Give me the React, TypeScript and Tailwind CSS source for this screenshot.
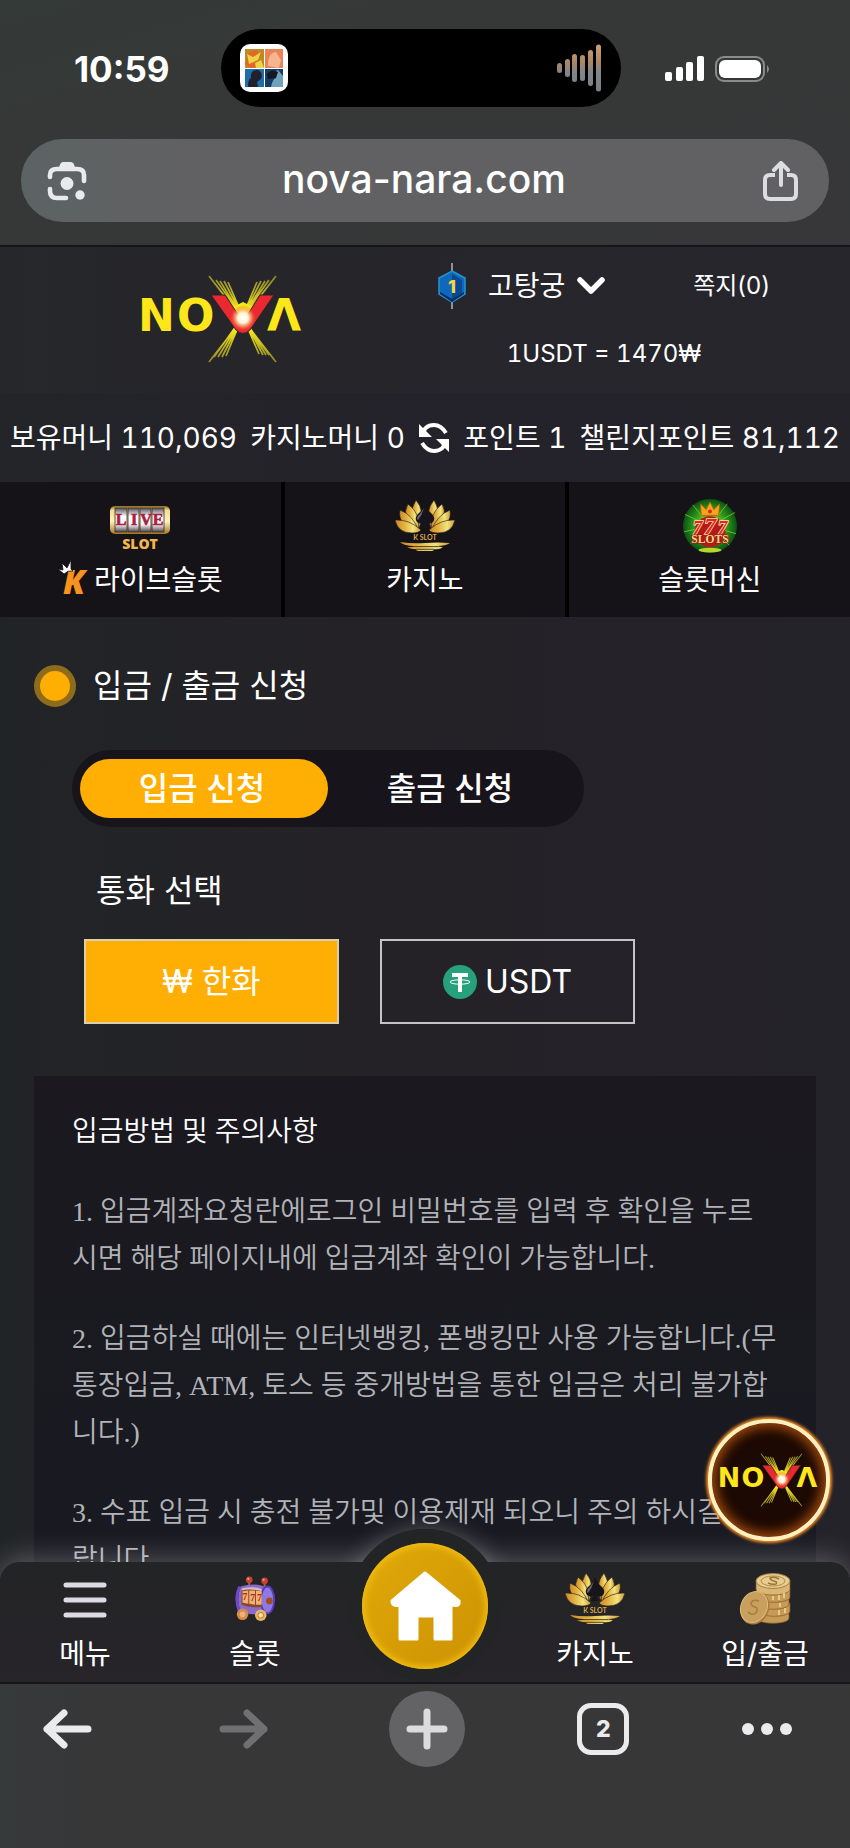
import { useId } from 'react'

const notices = [
  '1. 입금계좌요청란에로그인 비밀번호를 입력 후 확인을 누르시면 해당 페이지내에 입금계좌 확인이 가능합니다.',
  '2. 입금하실 때에는 인터넷뱅킹, 폰뱅킹만 사용 가능합니다.(무통장입금, ATM, 토스 등 중개방법을 통한 입금은 처리 불가합니다.)',
  '3. 수표 입금 시 충전 불가및 이용제재 되오니 주의 하시길 바랍니다.',
]

const waveBars = [
  { x: 0, h: 10 },
  { x: 8, h: 18 },
  { x: 15, h: 28 },
  { x: 23, h: 26 },
  { x: 31, h: 36 },
  { x: 39, h: 47 },
]

function NovaLogo({ className }: { className?: string }) {
  const id = useId()
  return (
    <svg viewBox="0 0 164 88" className={className} role="img" aria-label="NOVA">
      <defs>
        <radialGradient id={`${id}glow`}>
          <stop offset="0" stopColor="#fff" />
          <stop offset=".4" stopColor="#fff6d8" />
          <stop offset=".65" stopColor="#ffb070" stopOpacity=".7" />
          <stop offset="1" stopColor="#f5452a" stopOpacity="0" />
        </radialGradient>
        <linearGradient id={`${id}rays`} x1="0" x2="0" y1="0" y2="88" gradientUnits="userSpaceOnUse">
          <stop offset="0" stopColor="#8a8528" />
          <stop offset=".4" stopColor="#f6e61c" />
          <stop offset=".62" stopColor="#f6e61c" />
          <stop offset="1" stopColor="#8a8528" />
        </linearGradient>
      </defs>
      <g stroke={`url(#${id}rays)`} strokeWidth="1.7">
        <path d="M69 1 136 87M76 5 129 80M80 6 126 80M84 6 123 80M88 7 119 79" />
        <path d="M136 1 69 87M129 5 74 82M125 6 78 82M121 6 82 82M117 7 86 81" />
      </g>
      <path d="m93 32 10-5 10 5-10 20z" fill="#f6e61c" />
      <g fill="#fde71a" fontFamily="DejaVu Sans" fontWeight="700" fontSize="44">
        <text x="-2" y="56">
          N
        </text>
        <text x="37" y="56">
          O
        </text>
        <text x="127" y="56">
          Λ
        </text>
      </g>
      <path d="M71 20h14l18 27 17-27h14l-24 35q-7 7-14 0z" fill="#e9292f" stroke="#26252a" strokeWidth="1" />
      <circle cx="103" cy="43" r="13" fill={`url(#${id}glow)`} />
    </svg>
  )
}

function LotusIcon() {
  const id = useId()
  return (
    <svg viewBox="0 0 60 54" className="h-[54px] w-[60px]">
      <defs>
        <linearGradient id={`${id}gold`}>
          <stop offset="0" stopColor="#d08a25" />
          <stop offset=".35" stopColor="#e2b040" />
          <stop offset=".7" stopColor="#f3e37c" />
          <stop offset="1" stopColor="#cf9a38" />
        </linearGradient>
      </defs>
      <g fill={`url(#${id}gold)`} stroke="#1a171b" strokeWidth=".6">
        <path d="M21 1q10 12 3 28-13-11-3-28z" />
        <path d="M39 1q-10 12-3 28 13-11 3-28z" />
        <path d="M13 5Q5 19 23 31 27 16 13 5z" />
        <path d="M47 5q8 14-10 26Q33 16 47 5z" />
        <path d="M5 11q-3 16 19 21Q18 16 5 11z" />
        <path d="M55 11q3 16-19 21 6-16 19-21z" />
        <path d="M0 21q3 13 17 13 7 0 9-3Q14 20 0 21z" />
        <path d="M60 21q-3 13-17 13-7 0-9-3 12-11 26-10z" />
      </g>
      <path d="M30 5q2 6 7 10 4 4 1 8-3 3-7 0l3 6h-8l3-6q-4 3-7 0-3-4 1-8 5-4 7-10z" fill="#17151b" />
      <path d="M29 9q-3 5-6 8-2 3 0 4 4-5 6-12z" fill="#6a6670" />
      <text x="30" y="41" textAnchor="middle" fontFamily="Lato" fontSize="7" fontWeight="700" fill="#d9a744">
        K SLOT
      </text>
      <path
        d="M5 43q12 2 25 1t25 0q-4 3-13 3 2 1 6 1-3 3-9 2 1 1-2 2H23q-3-1-2-2-6 0-9-2 4 1 7-1-10 0-14-4z"
        fill={`url(#${id}gold)`}
      />
      <path d="M17 47.600h26M21 50.300h18" stroke="#2a2118" strokeWidth=".8" />
    </svg>
  )
}

function LiveSlotIcon() {
  return (
    <svg viewBox="0 0 60 54" className="h-[54px] w-[60px]">
      <defs>
        <linearGradient id="reel" x2="0" y2="1">
          <stop offset="0" stopColor="#8f6a1e" />
          <stop offset=".15" stopColor="#f5dd8c" />
          <stop offset=".55" stopColor="#fff2bd" />
          <stop offset="1" stopColor="#a37622" />
        </linearGradient>
        <linearGradient id="paper" x2="0" y2="1">
          <stop offset="0" stopColor="#55505c" />
          <stop offset=".35" stopColor="#fff" />
          <stop offset=".7" stopColor="#f3eef2" />
          <stop offset="1" stopColor="#4a444e" />
        </linearGradient>
      </defs>
      <rect x="0" y="7" width="60" height="28" rx="5" fill="url(#reel)" />
      <g fill="url(#paper)" stroke="#3d2b18" strokeWidth=".8">
        <rect x="5" y="9" width="12" height="24" />
        <rect x="18" y="9" width="11" height="24" />
        <rect x="30" y="9" width="11" height="24" />
        <rect x="42" y="9" width="12" height="24" />
      </g>
      <g fontFamily="Liberation Serif" fontWeight="700" fontSize="16" fill="#a8203d" stroke="#a8203d" strokeWidth=".6" textAnchor="middle">
        <text x="11" y="26">
          L
        </text>
        <text x="24" y="26">
          I
        </text>
        <text x="36" y="26">
          V
        </text>
        <text x="48" y="26">
          E
        </text>
      </g>
      <text x="30" y="50" textAnchor="middle" fontFamily="Open Sans" fontWeight="800" fontSize="14" fill="#f3b750">
        SLOT
      </text>
    </svg>
  )
}

function SevensIcon() {
  return (
    <svg viewBox="0 0 56 56" className="h-[54px] w-[54px]">
      <defs>
        <radialGradient id="felt">
          <stop offset="0" stopColor="#c8ee3c" />
          <stop offset=".6" stopColor="#2f9c1c" />
          <stop offset="1" stopColor="#0a5313" />
        </radialGradient>
      </defs>
      <circle cx="28" cy="28" r="28" fill="url(#felt)" />
      <path
        d="M28 28 2 16M28 28 10 6M28 28 54 14M28 28 46 5M28 28 1 34M28 28 55 36M28 28 8 46M28 28 48 48"
        stroke="#8fdc3a"
        strokeWidth="1"
        opacity=".7"
      />
      <ellipse cx="28" cy="53" rx="12" ry="2.500" fill="#b9d62c" />
      <path d="m19 17-1-12 6 6 4-8 4 8 6-6-1 12z" fill="#f5a51c" stroke="#b5560b" strokeWidth=".8" />
      <circle cx="28" cy="13" r="2" fill="#d8261e" />
      <circle cx="28" cy="34" r="16" fill="#b51a17" />
      <g
        fontFamily="Liberation Serif"
        fontWeight="700"
        fontStyle="italic"
        fill="#e0261f"
        stroke="#ffe3b0"
        strokeWidth="1.600"
        paintOrder="stroke"
        textAnchor="middle"
      >
        <text x="15" y="36" fontSize="20">
          7
        </text>
        <text x="41" y="36" fontSize="20">
          7
        </text>
        <text x="28" y="36" fontSize="25">
          7
        </text>
      </g>
      <text
        x="28"
        y="46"
        textAnchor="middle"
        fontFamily="Liberation Serif"
        fontWeight="700"
        fontSize="12"
        fill="#f7d58a"
        stroke="#9c1b10"
        strokeWidth="1.500"
        paintOrder="stroke"
      >
        SLOTS
      </text>
    </svg>
  )
}

function SlotMachineIcon() {
  return (
    <svg viewBox="0 0 42 48" className="h-[46px] w-[42px]">
      <path d="M15 5v9M31 6v8" stroke="#a9694b" strokeWidth="2" />
      <circle cx="15" cy="4" r="3.500" fill="#c8402f" />
      <circle cx="31" cy="5" r="3.500" fill="#c8402f" />
      <circle cx="14" cy="3" r="1.200" fill="#f09a80" />
      <circle cx="30" cy="4" r="1.200" fill="#f09a80" />
      <path d="M6 11q18-5 28 2v26q-14 3-28-2-5-12 0-26z" fill="#8a6bc9" />
      <path d="M7 13q14-3 22 1l-1 4q-10-3-20 0z" fill="#d8b8c4" />
      <path d="M5 11q-6 12 0 27" stroke="#6d4ad0" strokeWidth="3" fill="none" />
      <ellipse cx="34" cy="25" rx="7" ry="14" fill="#8c7ae0" stroke="#5a39bd" strokeWidth="2" />
      <path d="M7 15q10-2 21 1v16q-10 2-21-2z" fill="#8a4528" />
      <path d="M8 16l6-1v14l-6-1zM15 15h6v15l-6-1zM22 15l6 1v14h-6z" fill="#eeb173" />
      <g fontFamily="Liberation Serif" fontWeight="700" fontSize="10" fill="#b3261c">
        <text x="8" y="25">
          7
        </text>
        <text x="16" y="26">
          7
        </text>
        <text x="23" y="26">
          7
        </text>
      </g>
      <circle cx="36" cy="26" r="3.500" fill="#a34a22" />
      <circle cx="8" cy="40" r="6" fill="#d98a4a" />
      <circle cx="27" cy="41" r="6" fill="#eab765" />
      <circle cx="8" cy="40" r="3" fill="#eab27a" />
      <circle cx="27" cy="41" r="3" fill="#f8dfa0" stroke="#b6752d" />
    </svg>
  )
}

function CoinsIcon() {
  return (
    <svg viewBox="0 0 52 54" className="h-[54px] w-[52px]">
      <g fill="#c79a55" stroke="#7f5a2a" strokeWidth=".7">
        <path d="M18 38v8c0 7 32 7 32 0v-8z" />
        <path d="M20 31v8c0 7 31 7 31 0v-8z" />
        <path d="M18 24v8c0 7 32 7 32 0v-8z" />
        <path d="M19 17v8c0 7 32 7 32 0v-8z" />
        <path d="M17 9v8c0 8 34 8 34 0V9z" fill="#dbb775" />
      </g>
      <path d="M40 23v5M45 21v5M34 24v4M40 38v5M46 36v5M41 31v4" stroke="#f2dca0" strokeWidth="1.500" />
      <ellipse cx="34" cy="9" rx="17" ry="7.500" fill="#e9cd90" stroke="#a57e43" />
      <ellipse cx="34" cy="9" rx="12" ry="5" fill="none" stroke="#b18b4d" />
      <path d="M40 7q-5-3-9-1 0 2 4 3t2 3q-4 1-8-1" fill="none" stroke="#9b7438" strokeWidth="1.500" />
      <ellipse cx="16" cy="36" rx="14" ry="17" transform="rotate(24 16 36)" fill="#a87c40" />
      <ellipse cx="15" cy="35" rx="13" ry="16" transform="rotate(24 15 35)" fill="#c99f5d" stroke="#e0bd7d" />
      <path d="M20 29q-6-2-8 2 0 3 4 4t1 6q-4 3-8-1" fill="none" stroke="#a57b3e" strokeWidth="1.500" />
    </svg>
  )
}

function StatusBar() {
  return (
    <div className="flex items-center pt-[29px]">
      <div className="w-[221px] pl-[74px] pt-[2px] text-[35px] font-bold leading-10 text-white">10:59</div>
      <div className="flex h-[78px] flex-1 items-center justify-between rounded-full bg-black pl-[19px] pr-[20px]">
        <svg viewBox="0 0 48 48" className="h-12 w-12">
          <rect width="48" height="48" rx="10" fill="#fff" />
          <path d="M5 5h19v19H5z" fill="#b98a25" />
          <path d="M5 20 9 9l7-3 6 5-5 3 3 8-8 2z" fill="#e8642a" />
          <path d="M7 10l6 3 8-5-3 8-9 4zM15 19l6-3 3 8h-8z" fill="#ead547" />
          <path d="M25 5h18v19H25z" fill="#e88455" />
          <path d="M28 22c0-9 2-13 8-14l5 8-2 8z" fill="#f6b690" />
          <path d="M5 25h19v18H5z" fill="#1d6fa8" />
          <path d="M8 43c0-6 1-8 3-9-1-5 2-8 6-8s6 5 4 9l-4 3 1 5z" fill="#22202e" />
          <path d="M25 25h18v18H25z" fill="#153b66" />
          <path d="M31 43c1-5 3-9 5-9l-2-6 4-2 5 6v11z" fill="#6fa3bb" />
          <path d="M27 30q5-6 11-2l-2 6-8 1z" fill="#141724" />
        </svg>
        <svg viewBox="0 0 44 48" className="h-12 w-11">
          <defs>
            <linearGradient id="wave" x1="0" y1="0" x2="0" y2="48" gradientUnits="userSpaceOnUse">
              <stop offset="0" stopColor="#cf9f76" />
              <stop offset=".4" stopColor="#a98566" />
              <stop offset=".6" stopColor="#80858c" />
              <stop offset="1" stopColor="#7b8084" />
            </linearGradient>
          </defs>
          {waveBars.map((bar) => (
            <rect key={bar.x} x={bar.x} y={24 - bar.h / 2} width="5" height={bar.h} rx="2.5" fill="url(#wave)" />
          ))}
        </svg>
      </div>
      <div className="flex w-[229px] items-center gap-[10px] pl-[44px] pt-[2px]">
        <svg viewBox="0 0 40 26" className="h-[26px] w-10" fill="#fff">
          <rect x="0" y="16" width="7" height="9" rx="2" />
          <rect x="11" y="11" width="7" height="14" rx="2" />
          <rect x="21" y="6" width="7" height="19" rx="2" />
          <rect x="32" y="0" width="7" height="25" rx="2" />
        </svg>
        <svg viewBox="0 0 56 26" className="h-[26px] w-14">
          <rect x="1" y="1" width="48" height="24" rx="8" fill="none" stroke="#8b8b8c" strokeWidth="2" />
          <rect x="4" y="4" width="42" height="18" rx="6" fill="#fff" />
          <path d="M52 9q4 4 0 8z" fill="#8b8b8c" />
        </svg>
      </div>
    </div>
  )
}

function AddressBar() {
  return (
    <div className="mx-[21px] mb-[23px] mt-8 flex h-[83px] items-center justify-between rounded-full bg-linear-to-r from-[#5c6363] via-[#616163] via-20% to-[#616163] pl-[26px] pr-7">
      <button type="button" aria-label="Search with camera">
        <svg viewBox="0 0 40 40" className="h-10 w-10" fill="none" stroke="#e8eaed" strokeWidth="4.600" strokeLinecap="round">
          <path d="M3 16v-2q0-6 7-6h20q7 0 7 6v6" />
          <path d="M3 28v2q0 7 7 7h9" />
          <path d="M12 7q1-6 4-6h8q3 0 4 6z" fill="#e8eaed" stroke="none" />
          <circle cx="20" cy="22.500" r="6.500" fill="#e8eaed" stroke="none" />
          <circle cx="33" cy="34" r="4.700" fill="#e8eaed" stroke="none" />
        </svg>
      </button>
      <span className="pb-1 text-[39px] font-medium leading-[48px] text-white">nova-nara.com</span>
      <button type="button" aria-label="Share">
        <svg viewBox="0 0 40 40" className="h-10 w-10" fill="none" stroke="#dcdde0" strokeWidth="4" strokeLinecap="round">
          <path d="M14 14H9q-5 0-5 5v14q0 5 5 5h21q5 0 5-5V19q0-5-5-5h-4" strokeLinecap="butt" />
          <path d="M20 24V3M13 9l7-7 7 7" strokeLinejoin="round" />
        </svg>
      </button>
    </div>
  )
}

function SiteHeader() {
  return (
    <header className="flex h-[148px] shrink-0 border-t-2 border-[#151517] bg-linear-to-r from-[#25282b] via-[#26252a] via-20% to-[#27262d]">
      <div className="flex flex-1 justify-center pl-[6px] pt-7">
        <a href="/">
          <NovaLogo className="h-[88px] w-[164px]" />
        </a>
      </div>
      <div className="mr-20 w-[332px] pt-4 text-white">
        <div className="flex items-center justify-between">
          <button type="button" className="flex items-center text-[28px] leading-[46px]">
            <svg viewBox="0 0 28 46" className="mr-[22px] h-[46px] w-7">
              <path d="M14 0v46" stroke="#8f9192" strokeWidth="2" />
              <path d="m14 8 13 7v16l-13 8-13-8V15z" fill="#0f68bb" stroke="#2494cf" strokeWidth="1.500" />
              <path d="m14 11 10 6v13l-10 6z" fill="#094a91" />
              <path d="m14 36 12-7v2l-12 8-12-8v-2z" fill="#072e60" />
              <text x="14" y="30" textAnchor="middle" fontFamily="Inter" fontWeight="800" fontSize="18" fill="#f7d54a">
                1
              </text>
            </svg>
            고탕궁
            <svg viewBox="0 0 28 18" className="ml-3 h-[18px] w-7" fill="none" stroke="#fff" strokeWidth="5.500">
              <path d="m3 3 11 11L25 3" strokeLinecap="round" strokeLinejoin="round" />
            </svg>
          </button>
          <a href="/messages" className="text-[24px] leading-[46px]">
            쪽지(0)
          </a>
        </div>
        <p className="mt-[22px] text-center text-[24px] leading-[46px] tabular-nums">1USDT = 1470₩</p>
      </div>
    </header>
  )
}

function BalanceBar() {
  return (
    <div className="flex h-[89px] shrink-0 items-center justify-between whitespace-nowrap bg-linear-to-r from-[#232529] via-[#24222a] to-[#25232a] px-[10px] text-[28px] tabular-nums text-white">
      <span>보유머니 110,069</span>
      <span>카지노머니 0</span>
      <button type="button" aria-label="새로고침">
        <svg viewBox="0 0 32 32" className="h-8 w-8" fill="none" stroke="#fff" strokeWidth="4">
          <path d="M4 14Q6 3 16 3q7 0 12 8" />
          <path d="M28 18q-2 11-12 11-7 0-12-8" />
          <path d="M1 2v13h13zM31 30V17H18z" fill="#fff" stroke="none" />
        </svg>
      </button>
      <span>포인트 1</span>
      <span>챌린지포인트 81,112</span>
    </div>
  )
}

function CategoryNav() {
  return (
    <nav className="grid h-[135px] shrink-0 grid-cols-3 gap-1 bg-black text-[28px] leading-10 text-white">
      <a href="/live-slot" className="flex flex-col items-center gap-[7px] bg-[#151318] pt-[17px]">
        <LiveSlotIcon />
        <span className="flex items-center">
          <svg viewBox="0 0 36 40" className="h-10 w-9">
            <text x="5" y="34" fontFamily="Open Sans" fontWeight="800" fontStyle="italic" fontSize="33" fill="#f7931e">
              K
            </text>
            <path d="m0 9 5 1-1-7 5 5 4-8v9l2 2q-5-1-9 3z" fill="#fff" stroke="#151318" strokeWidth=".8" />
          </svg>
          라이브슬롯
        </span>
      </a>
      <a href="/casino" className="flex flex-col items-center gap-[7px] bg-[#151318] pt-[17px]">
        <LotusIcon />
        카지노
      </a>
      <a href="/slots" className="flex flex-col items-center gap-[7px] bg-[#151318] pt-[17px]">
        <SevensIcon />
        슬롯머신
      </a>
    </nav>
  )
}

function DepositPanel() {
  return (
    <main className="min-h-0 flex-1 overflow-y-auto bg-linear-to-r from-[#212427] via-[#242227] via-40% to-[#25232a] px-[34px] text-white [scrollbar-width:none]">
      <h1 className="mt-[45px] flex items-center gap-[17px] text-[32px] leading-[48px]">
        <span className="h-[42px] w-[42px] rounded-full border-6 border-[#8f6b1c] bg-[#ffae03]" />
        입금 / 출금 신청
      </h1>

      <div className="ml-[38px] mt-10 flex w-fit rounded-full bg-[#17151b] px-2 py-[9px] text-[32px] font-medium">
        <button type="button" className="h-[59px] w-[248px] rounded-full bg-[#ffae03] pr-1">
          입금 신청
        </button>
        <button type="button" className="h-[59px] w-[248px] rounded-full pr-1">
          출금 신청
        </button>
      </div>

      <h2 className="ml-[62px] mt-10 text-[32px] leading-[48px]">통화 선택</h2>
      <div className="ml-[50px] mt-6 flex gap-[41px] text-[32px]">
        <button type="button" className="h-[85px] w-[255px] border-2 border-[#dcd0ac] bg-[#ffae03]">
          ₩ 한화
        </button>
        <button type="button" className="flex h-[85px] w-[255px] items-center justify-center gap-2 border-2 border-[#c4c4c6]">
          <svg viewBox="0 0 34 34" className="h-[34px] w-[34px]">
            <circle cx="17" cy="17" r="17" fill="#26a17b" />
            <path d="M9 8h16v4h-6v15h-4V12H9z" fill="#fff" />
            <ellipse cx="17" cy="17" rx="10" ry="2.200" fill="none" stroke="#fff" />
          </svg>
          USDT
        </button>
      </div>

      <section className="mt-[52px] bg-[#1a1920] bg-linear-to-b from-[#1b191f] to-[#181a22] px-[38px] pb-20 pt-8 font-['Liberation_Serif','Noto_Sans_CJK_KR',serif] text-[28px] font-[350] leading-[47px]">
        <h3>입금방법 및 주의사항</h3>
        <div className="mt-[33px] flex flex-col gap-[33px] text-[#b1b3b8]">
          {notices.map((notice) => (
            <p key={notice}>{notice}</p>
          ))}
        </div>
      </section>
    </main>
  )
}

function SiteTabBar() {
  return (
    <nav className="relative z-10 h-[120px] shrink-0 text-[28px] leading-10 text-white">
      {/* Raised ring behind the home button, same glow as the bar */}
      <span className="absolute left-1/2 top-[-33px] h-[152px] w-[152px] -translate-x-1/2 rounded-full bg-[#232425] shadow-[0_0_24px_rgba(255,255,255,0.28)]" />
      <div className="relative grid h-full grid-cols-5 rounded-t-[20px] bg-linear-to-b from-[#232425] to-[#27242a] shadow-[0_-2px_30px_rgba(255,255,255,0.3)] [clip-path:inset(-60px_0_0_0)]">
        <a href="/menu" className="flex flex-col items-center gap-2 pt-[10px]">
          <svg viewBox="0 0 46 54" className="h-[54px] w-[46px]" stroke="#dddbe1" strokeWidth="5" strokeLinecap="round">
            <path d="M4 13h38M4 28h38M4 43h38" />
          </svg>
          메뉴
        </a>
        <a href="/slots" className="flex flex-col items-center gap-2 pt-[10px]">
          <span className="flex h-[54px] items-center">
            <SlotMachineIcon />
          </span>
          슬롯
        </a>
        <span />
        <a href="/casino" className="flex flex-col items-center gap-2 pt-[10px]">
          <LotusIcon />
          카지노
        </a>
        <a href="/wallet" className="flex flex-col items-center gap-2 pt-[10px]">
          <CoinsIcon />
          입/출금
        </a>
      </div>
      <span className="absolute left-1/2 top-[-33px] h-[152px] w-[152px] -translate-x-1/2 rounded-full bg-[#232425]" />
      <a
        href="/"
        aria-label="홈"
        className="absolute left-1/2 top-[-19px] flex h-[126px] w-[126px] -translate-x-1/2 items-center justify-center rounded-full bg-linear-to-br from-[#e2aa0a] to-[#cc9103] shadow-[inset_0_0_6px_3px_#f0bd10]"
      >
        <svg viewBox="0 0 72 72" className="h-[72px] w-[72px]" fill="#fff" stroke="#fff" strokeWidth="3" strokeLinejoin="round">
          <path d="M36 3 70 31q1 6-6 4l-2 0v34H46V46H28v23H11V35q-8 2-8-4z" />
        </svg>
      </a>
      <a
        href="/chat"
        aria-label="NOVA"
        className="absolute right-5 top-[-143px] flex h-[122px] w-[122px] items-center justify-center rounded-full border-4 border-[#fff0bd] bg-[#1c0903] shadow-[0_0_3px_2px_#f08a24,inset_0_0_12px_4px_#a34a0c]"
      >
        <NovaLogo className="h-[54px] w-[100px]" />
      </a>
    </nav>
  )
}

function BrowserToolbar() {
  return (
    <footer className="z-10 h-[166px] shrink-0 border-t-2 border-[#161617] bg-linear-to-r from-[#363a3a] via-[#373738] via-10% to-[#373738] pt-[7px]">
      <div className="flex h-[76px] items-center justify-between pl-[35px] pr-[58px]">
        <button type="button" aria-label="Back" className="flex w-16 justify-center">
          <svg viewBox="0 0 50 42" className="h-[42px] w-[50px]" fill="none" stroke="#ebebed" strokeWidth="7" strokeLinecap="round" strokeLinejoin="round">
            <path d="M46 21H5M22 5 5 21l17 16" />
          </svg>
        </button>
        <button type="button" aria-label="Forward" className="flex w-16 justify-center">
          <svg viewBox="0 0 50 42" className="h-[42px] w-[50px]" fill="none" stroke="#707072" strokeWidth="7" strokeLinecap="round" strokeLinejoin="round">
            <path d="M4 21h41M28 5l17 16-17 16" />
          </svg>
        </button>
        <button type="button" aria-label="New tab" className="flex h-[76px] w-[76px] items-center justify-center rounded-full bg-[#636365]">
          <svg viewBox="0 0 42 42" className="h-[42px] w-[42px]" stroke="#dcdcde" strokeWidth="7" strokeLinecap="round">
            <path d="M21 4v34M4 21h34" />
          </svg>
        </button>
        <button type="button" aria-label="Tabs" className="h-[52px] w-[52px] rounded-[14px] border-[5px] border-[#ebebed] text-[23px] font-extrabold leading-[42px] text-[#ebebed]">
          2
        </button>
        <button type="button" aria-label="More">
          <svg viewBox="0 0 50 12" className="h-3 w-[50px]" fill="#ebebed">
            <circle cx="6" cy="6" r="6" />
            <circle cx="25" cy="6" r="6" />
            <circle cx="44" cy="6" r="6" />
          </svg>
        </button>
      </div>
    </footer>
  )
}

export default function App() {
  return (
    <div className="flex h-screen flex-col overflow-hidden bg-[#242227] font-['Inter','Noto_Sans_CJK_KR',sans-serif]">
      <div className="shrink-0 bg-linear-to-br from-[#343a38] via-[#363737] via-50% to-[#373739]">
        <StatusBar />
        <AddressBar />
      </div>
      <SiteHeader />
      <BalanceBar />
      <CategoryNav />
      <DepositPanel />
      <SiteTabBar />
      <BrowserToolbar />
    </div>
  )
}
